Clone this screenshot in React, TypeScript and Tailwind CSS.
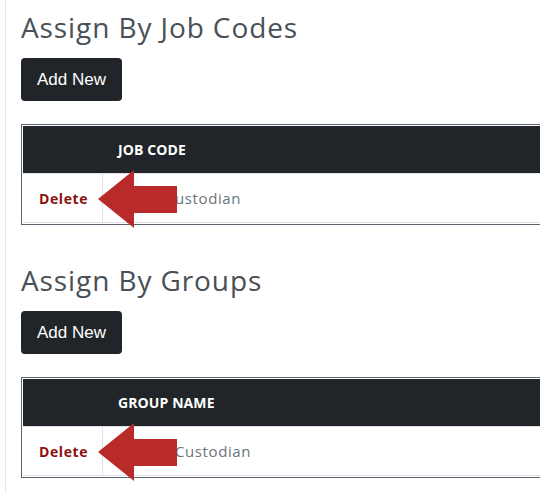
import React from "react";

const font = { fontFamily: '"Open Sans", "Liberation Sans", sans-serif' };

function Arrow() {
  return (
    <svg
      className="absolute left-0 top-0 pointer-events-none"
      width="200"
      height="110"
      viewBox="0 0 200 110"
    >
      <polygon
        points="76,74 112,45 112,61 155,61 155,88 112,88 112,103"
        fill="#b92b2b"
      />
    </svg>
  );
}

function Section({
  title,
  header,
  value,
  valuePad,
  className,
}: {
  title: string;
  header: string;
  value: string;
  valuePad: string;
  className?: string;
}) {
  return (
    <div className={className}>
      <h2
        className="text-[28px] leading-[34px] text-[#495057] tracking-[0.9px]"
        style={font}
      >
        {title}
      </h2>
      <button
        className="mt-[14px] h-[43px] w-[101px] rounded-[4px] bg-[#212529] text-white text-[17px]"
        style={{ fontFamily: '"Liberation Sans", Arial, sans-serif' }}
      >
        Add New
      </button>
      <div className="relative mt-[23px] w-[560px] border border-[#5c6670] p-[1px]">
        <div className="flex h-[47px] items-center bg-[#212529]">
          <div className="w-[80px]" />
          <div
            className="pl-[15px] text-[14px] font-bold text-white tracking-[0.1px]"
            style={font}
          >
            {header}
          </div>
        </div>
        <div className="flex h-[50px] border-t border-[#dee2e6] border-b">
          <div className="flex w-[80px] items-center border-r border-[#dee2e6] pl-[16px]">
            <span
              className="text-[14px] font-bold text-[#8b1010] tracking-[0.6px]"
              style={font}
            >
              Delete
            </span>
          </div>
          <div
            className={`flex items-center text-[15px] text-[#6c757d] tracking-[0.6px] ${valuePad}`}
            style={font}
          >
            {value}
          </div>
        </div>
        <Arrow />
      </div>
    </div>
  );
}

export default function App() {
  return (
    <div className="h-[493px] w-[540px] overflow-hidden bg-white pl-[5px]">
      <div className="h-full border-l border-[#e6e6e6] pl-[15px]">
        <Section
          className="pt-[10px]"
          title="Assign By Job Codes"
          header="JOB CODE"
          value="Custodian"
          valuePad="pl-[62px]"
        />
        <Section
          className="pt-[38px]"
          title="Assign By Groups"
          header="GROUP NAME"
          value="Custodian"
          valuePad="pl-[72px]"
        />
      </div>
    </div>
  );
}
